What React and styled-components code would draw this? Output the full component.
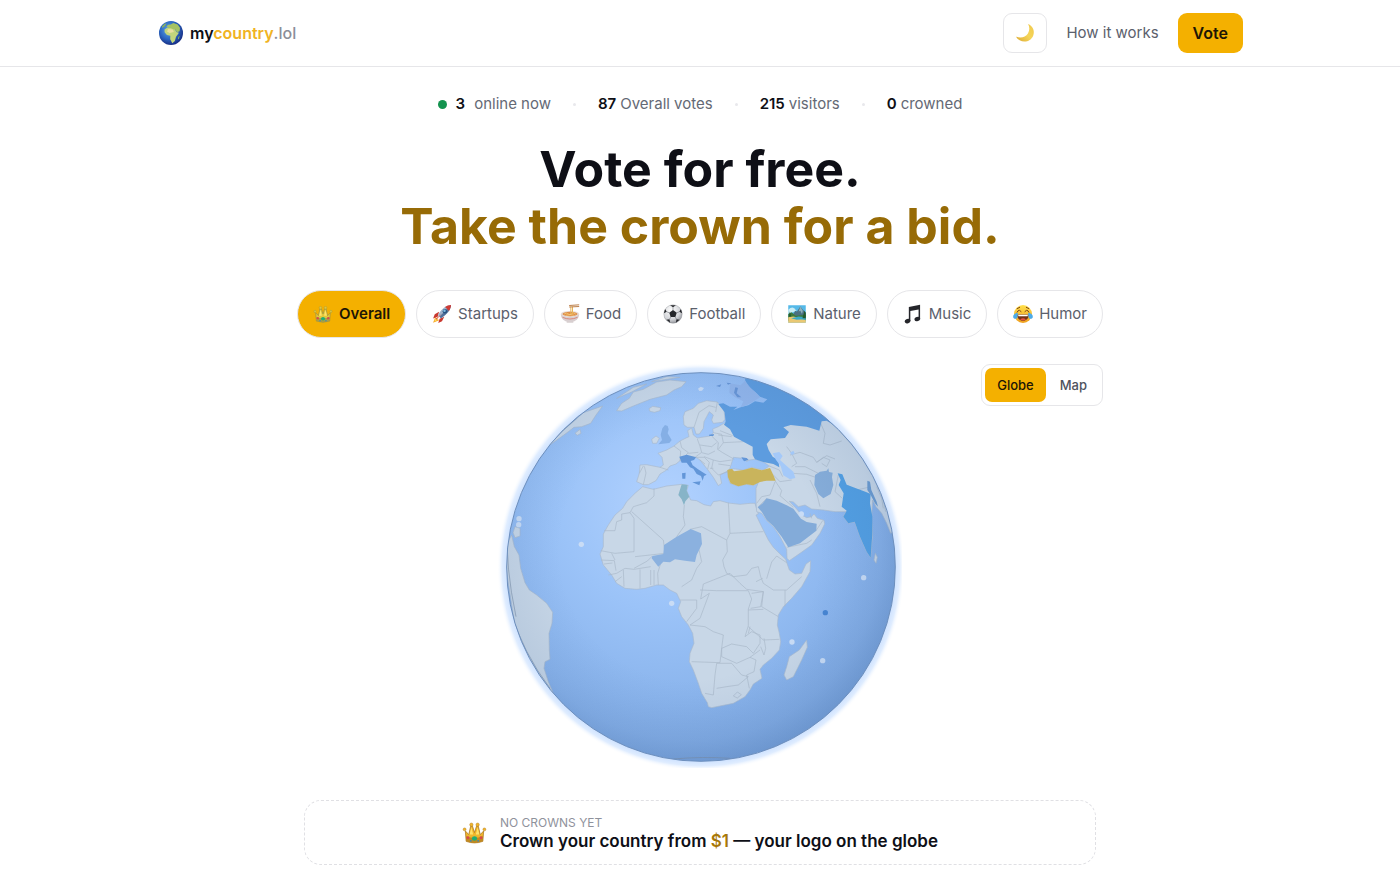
import React, { useState } from "react";
import styled, { createGlobalStyle, css } from "styled-components";

const GlobalStyle = createGlobalStyle`
  *, *::before, *::after { box-sizing: border-box; }
  body {
    margin: 0;
    background: #fff;
    color: #0e0f16;
    font-family: Inter, "Liberation Sans", sans-serif;
    font-size: 15px;
    line-height: 24px;
  }
  button, a { font: inherit; color: inherit; text-decoration: none; }
  button { cursor: pointer; }
`;

const Header = styled.header`
  border-bottom: 1px solid #e6e6e9;
`;

const HeaderInner = styled.div`
  max-width: 1086px;
  min-height: 66px;
  margin: 0 auto;
  display: flex;
  align-items: center;
  justify-content: space-between;
`;

const Brand = styled.a`
  display: flex;
  align-items: center;
  gap: 5px;
  font-size: 16px;
  font-weight: 600;
`;

const BrandAccent = styled.span`
  color: #f0b323;
`;

const BrandSuffix = styled.span`
  color: #8b8e99;
  font-weight: 500;
`;

const Nav = styled.nav`
  display: flex;
  align-items: center;
  gap: 19px;
`;

const NavLink = styled.a`
  color: #5b606c;
`;

const ThemeButton = styled.button`
  width: 44px;
  height: 40px;
  display: grid;
  place-items: center;
  padding: 0;
  border: 1px solid #e6e6e9;
  border-radius: 9px;
  background: #fff;
`;

const VoteLink = styled.a`
  padding: 8px 15px;
  border-radius: 9px;
  background: #f4b000;
  color: #1d1605;
  font-size: 16px;
  font-weight: 600;
`;

const Main = styled.main`
  max-width: 806px;
  margin: 0 auto;
  padding-top: 25px;
`;

const Stats = styled.ul`
  display: flex;
  justify-content: center;
  gap: 22px;
  margin: 0;
  padding: 0;
  list-style: none;
  color: #646975;
`;

const Stat = styled.li`
  display: flex;
  align-items: center;
  gap: ${(p) => (p.$live ? 9 : 4)}px;

  &:not(:first-child)::before {
    content: "";
    width: 3px;
    height: 3px;
    margin-right: 18px;
    border-radius: 50%;
    background: #e8e8ec;
  }
`;

const StatValue = styled.strong`
  color: #0e0f16;
  font-weight: 600;
`;

const LiveDot = styled.span`
  width: 9px;
  height: 9px;
  border-radius: 50%;
  background: #14934f;
`;

const Title = styled.h1`
  margin: 25px 0 0;
  font-size: 50px;
  line-height: 57px;
  font-weight: 700;
  text-align: center;
`;

const TitleAccent = styled.span`
  display: block;
  color: #976b06;
`;

const Categories = styled.div`
  display: flex;
  justify-content: space-between;
  margin-top: 35px;
`;

const Category = styled.button`
  display: flex;
  align-items: center;
  gap: 6px;
  height: 48px;
  padding: 0 15px;
  border: 1px solid #e6e6e9;
  border-radius: 24px;
  background: #fff;
  color: #5b606c;

  ${(p) =>
    p.$active &&
    css`
      background: #f4b000;
      color: #1d1605;
      font-weight: 600;
    `}
`;

const Stage = styled.section`
  display: grid;
  grid-template-columns: 1fr auto 1fr;
  align-items: start;
  margin-top: 26px;
`;

const GlobeArt = styled.svg`
  grid-column: 2;
  display: block;
  width: 404px;
  height: 404px;
`;

const ViewSwitch = styled.div`
  grid-column: 3;
  justify-self: end;
  display: flex;
  gap: 2px;
  padding: 3px;
  border: 1px solid #e6e6e9;
  border-radius: 9px;
`;

const ViewButton = styled.button`
  height: 34px;
  padding: 0 12px;
  border: 0;
  border-radius: 7px;
  background: ${(p) => (p.$active ? "#f4b000" : "transparent")};
  color: ${(p) => (p.$active ? "#1d1605" : "#4f535e")};
  font-size: 13px;
  font-weight: 500;
`;

const CrownCard = styled.a`
  display: flex;
  align-items: center;
  justify-content: center;
  gap: 13px;
  margin: 32px 7px 0;
  padding: 13px 16px;
  border: 1px dashed #e0e0e4;
  border-radius: 17px;
`;

const CardLabel = styled.span`
  display: block;
  color: #8f929c;
  font-size: 12px;
  line-height: 17px;
`;

const CardText = styled.strong`
  display: block;
  font-size: 17px;
  line-height: 20px;
  font-weight: 600;
`;

const Price = styled.span`
  color: #a87808;
`;

const IconSvg = styled.svg`
  display: block;
  flex: none;
`;

function Icon({ size = 20, children }) {
  return (
    <IconSvg width={size} height={size} viewBox="0 0 24 24" aria-hidden="true">
      {children}
    </IconSvg>
  );
}

function EarthIcon() {
  return (
    <Icon size={28}>
      <defs>
        <radialGradient id="earth" cx="42%" cy="38%" r="62%">
          <stop offset="0" stopColor="#62a9e6" />
          <stop offset=".6" stopColor="#2c67c2" />
          <stop offset="1" stopColor="#182f86" />
        </radialGradient>
      </defs>
      <circle cx="12" cy="12" r="10.3" fill="url(#earth)" />
      <path d="M6.500 9 9 7.200l4 .4 2.400 1.200 1.200 2.400 2.200.5-2.500 3.600-1 3.600-2.200 1.800-1.800-3.400.1-3-2.900-.5-2-2.400z" fill="#c3d67c" />
      <path d="M8 6.700 9.500 5l2.300-.2L14 3.400l3.700 1.400 2 2.800-.3 2.800-2.400 1-1.300-2.400-2.200-.3-1.900-1.200-1.500.2-.7-.8z" fill="#a5c262" />
      <path d="m9.500 8.500 4 .6 1 2-3.700.8-2.200-1.200z" fill="#ebe0a0" />
      <path d="m4.300 6.300 2.500-2.400 1.500.1-2 2.700-2 1zM18.200 15.400l1.200-1-.5 2.600-1 .6z" fill="#83ae66" />
    </Icon>
  );
}

function MoonIcon() {
  return (
    <Icon size={22}>
      <defs>
        <linearGradient id="moon" x1="0" y1="1" x2="1" y2="0">
          <stop offset="0" stopColor="#dca833" />
          <stop offset=".5" stopColor="#f5d559" />
          <stop offset="1" stopColor="#efc84d" />
        </linearGradient>
      </defs>
      <path d="M15.300 2.200c5.200 2.100 7.600 7.500 5.700 12.400-2.300 6.100-9.300 8.400-14.800 5.300-1.800-1-3.200-2.500-4-4.200 4.700 2.400 10.200 1.100 13-3.200 2-3.300 2-7 .1-10.300z" fill="url(#moon)" />
    </Icon>
  );
}

function CrownIcon({ size, soft }) {
  const gold = soft ? "#e3c83a" : "#f0b62b";
  const shade = soft ? "#8f8b4a" : "#a9731a";
  return (
    <Icon size={size}>
      <path d="M3.200 10.500 6.500 14 8.300 6h1.800l1.900 6 1.900-6h1.800l1.800 8 3.300-3.500-.8 10q-8 3-16 0z" fill={gold} stroke={shade} strokeWidth=".7" />
      <path d="M4 15.500q8 3 16 0l-.2 5q-7.800 2.700-15.600 0z" fill={shade} opacity=".65" />
      <g fill={gold} stroke={shade} strokeWidth=".4">
        <circle cx="2.500" cy="9" r="1.400" />
        <circle cx="9" cy="4.500" r="1.600" />
        <circle cx="15" cy="4.500" r="1.600" />
        <circle cx="21.500" cy="9" r="1.400" />
      </g>
      <path d="m7.300 14 1.700-7 1.700 7zM13.300 14 15 7l1.700 7z" fill="#ffe26a" />
      <ellipse cx="12" cy="17.800" rx="2.500" ry="2.100" fill="#20ad76" />
      <circle cx="5.700" cy="17" r="1.400" fill="#d64a4a" />
      <circle cx="18.300" cy="17" r="1.400" fill="#d64a4a" />
      <circle cx="8.500" cy="20" r=".9" fill="#3a87b8" />
      <circle cx="15.500" cy="20" r=".9" fill="#3a87b8" />
    </Icon>
  );
}

function RocketIcon() {
  return (
    <Icon>
      <path d="M1.300 22.500 4 15.500l4.500 4z" fill="#f5a623" />
      <path d="m2.700 21 1.800-4.500 2.600 2.300z" fill="#ffe066" />
      <path d="m8.500 9.300-5.200 2.900-2 5.300 5.500-2.200zM14.700 15.300 12 20.600l-4.500 2.300 1.600-5.200z" fill="#c9382f" />
      <path d="M22.800 1.200c-5.600.3-10.700 3.700-15.700 12.200l3.700 3.600c8-4.800 11.700-10 12-15.800z" fill="#9fb3cc" />
      <path d="M22.800 1.200c-.6 5.300-4.500 10.700-12 15.800l-1.900-1.800z" fill="#53719b" />
      <path d="M22.800 1.200c-2.700.1-5 1-7.100 2.500l4.700 4.600c1.500-2.300 2.300-4.600 2.400-7.100z" fill="#cf3b35" />
      <circle cx="15.500" cy="8.700" r="2.700" fill="#29527f" />
      <circle cx="15" cy="8.200" r="1.500" fill="#7fbbe4" />
      <path d="m12 11.500-6.800 7.300-1-.9z" fill="#d94b37" />
    </Icon>
  );
}

function BowlIcon() {
  return (
    <Icon>
      <path d="M1 12h22c0 5-3.300 8-7 9.100v1.400H8v-1.400C4.300 20 1 17 1 12z" fill="#d8cfd0" />
      <ellipse cx="12" cy="12" rx="11" ry="3.700" fill="#e7dbd6" />
      <ellipse cx="12" cy="12" rx="9" ry="2.700" fill="#dd8d48" />
      <path d="M5 12q3-2 5 0t4-.3 5 .5M7 13.500q5-1.500 10 0" stroke="#f5ca74" fill="none" />
      <path d="M13 12V3.200M15 12V3.200" stroke="#e6b55a" strokeWidth="1.200" />
      <path d="M11 1.800 23 1M11 3.600 23 3" stroke="#b7743a" strokeWidth="1.100" />
      <path d="M3 16q9 4 18 0" stroke="#d77a6e" fill="none" />
    </Icon>
  );
}

function BallIcon() {
  return (
    <Icon>
      <defs>
        <radialGradient id="ball" cx="40%" cy="30%" r="75%">
          <stop offset="0" stopColor="#fff" />
          <stop offset=".65" stopColor="#d4d6da" />
          <stop offset="1" stopColor="#8d8f94" />
        </radialGradient>
      </defs>
      <circle cx="12" cy="12" r="11" fill="url(#ball)" stroke="#777a80" strokeWidth=".4" />
      <path d="m12 7.300 4.500 3.200-1.700 5.200H9.200l-1.700-5.200z" fill="#25272b" />
      <path d="M8.500 1.600h7L12 3.800zM1 11.200 2.500 6l2 3.400zM23 11.200 21.500 6l-2 3.400zM4.200 18.800l4.300 3.600-.7-4zM19.800 18.800l-4.300 3.600.7-4z" fill="#25272b" />
      <path d="M12 3.800v3.500M4.500 9.400l3 1.100M19.500 9.400l-3 1.100M9.200 15.700l-1.400 2.700M14.800 15.700l1.400 2.700" stroke="#686b71" strokeWidth=".7" />
    </Icon>
  );
}

function LandscapeIcon() {
  return (
    <Icon>
      <path d="M1.500 1.500h21v21h-21z" fill="#55b9e8" />
      <path d="M1.500 7q4-4 7-2l3 3-10 4z" fill="#c9edf5" />
      <path d="m7 13 3-5 2 1 4-6 3 4 3.500 3v8H7z" fill="#4b7081" />
      <path d="m16 3-2 6 2-1 2 4 1-4z" fill="#8fb2bd" />
      <path d="m1.500 12 4-2 5 4 12-1v7h-21z" fill="#3c7a3d" />
      <path d="m1.500 16 6-1 4 1 11 3v3.500h-21z" fill="#eac873" />
      <path d="m5 17 9-2 8.500 1v3q-6-1-11 0z" fill="#3aa9c9" />
      <path d="m2 15 1.500-6L5 15zM18.500 17 21 8l1.500 3v6z" fill="#245a2c" />
    </Icon>
  );
}

function NotesIcon() {
  return (
    <Icon>
      <path d="M7 3.500 20.500.8v17h-1.800V6.500L8.800 8.400V20.500H7z" fill="#25262b" />
      <ellipse cx="5.500" cy="20.500" rx="3.500" ry="2.600" transform="rotate(-18 5.500 20.500)" fill="#25262b" />
      <ellipse cx="17.200" cy="18" rx="3.500" ry="2.600" transform="rotate(-18 17.200 18)" fill="#25262b" />
    </Icon>
  );
}

function LaughIcon() {
  return (
    <Icon>
      <defs>
        <linearGradient id="laugh" x2="0" y2="1">
          <stop offset="0" stopColor="#ffe04b" />
          <stop offset="1" stopColor="#ef9f1e" />
        </linearGradient>
      </defs>
      <circle cx="12" cy="12" r="10.800" fill="url(#laugh)" />
      <path d="M5 12.500h14c0 4.500-3 7.500-7 7.500s-7-3-7-7.500z" fill="#743316" />
      <path d="M6 12.800h12l-.6 2H6.600z" fill="#fff" />
      <path d="M8.500 18.500q3.500-2.700 7 0-3.500 2.500-7 0z" fill="#e55143" />
      <path d="m5 9.800 1-1.600q1.700-1.700 3.700.8M19 9.800l-1-1.600q-1.700-1.700-3.700.8M5 5.500 8 4M19 5.500 16 4" fill="none" stroke="#7b4217" strokeWidth="1.200" strokeLinecap="round" />
      <path d="M5.800 10.500C2 11 .2 13 .2 15.300c0 3.300 4.700 3.400 5.200.2zM18.200 10.500c3.800.5 5.600 2.500 5.600 4.800 0 3.300-4.700 3.400-5.200.2z" fill="#4cabe9" />
    </Icon>
  );
}

const LAND = [
  // Africa
  "M428 380 460 388 500 378 545 373 565 376 560 392 572 420 590 422 612 434 632 438 640 425 660 422 685 429 720 433 750 430 765 430 775 462 768 465 785 500 805 540 820 562 838 580 857 598 868 630 885 642 905 640 918 612 932 602 930 635 905 680 875 715 850 740 835 765 832 795 838 820 842 845 838 870 815 895 790 915 780 928 786 955 760 972 750 990 735 1010 700 1030 660 1038 635 1043 625 1040 622 1028 605 1000 595 970 580 930 568 905 570 880 582 850 578 820 565 795 545 770 535 745 542 725 530 700 510 690 490 675 470 675 435 685 410 688 375 685 350 670 335 645 310 615 300 582 310 560 310 522 325 495 345 465 368 445 380 425 405 400z",
  // Eurasia
  "M420 315 440 314 480 322 490 315 486 292 474 280 500 270 522 258 540 243 558 234 567 230 563 212 575 204 580 225 592 234 630 228 640 218 638 207 655 200 672 190 720 150 960 120 1060 240 1230 500 1172 520 1160 490 1145 460 1128 440 1118 420 1115 470 1118 520 1112 593 1100 575 1080 530 1064 485 1045 490 1030 470 1038 455 1005 455 970 450 935 447 915 435 895 440 880 426 868 424 890 447 905 465 920 473 935 470 942 462 952 475 972 481 974 492 960 520 935 555 900 580 868 602 861 595 860 568 840 530 820 500 800 482 785 460 770 455 768 430 768 385 776 365 760 377 740 373 715 379 690 370 683 350 684 330 700 326 730 330 755 322 790 330 808 318 790 306 765 298 748 300 740 304 728 295 700 292 694 312 688 330 660 345 665 370 655 377 640 352 624 330 600 300 588 292 560 305 540 302 528 312 510 318 500 330 480 342 468 362 445 374 430 374 410 365 418 340z",
  // Scandinavia
  "M550 170 555 155 580 145 595 130 620 122 652 126 672 150 675 178 668 187 640 190 635 180 640 165 628 155 620 170 612 185 610 205 598 222 588 222 582 202 562 202 552 195z",
  // South America
  "M10 570 35 525 43 560 57 585 62 625 75 668 88 690 110 705 140 730 158 757 156 790 147 820 148 870 150 898 135 905 132 925 145 965 160 1000 60 900z",
  // Greenland and Iceland
  "M350 152 365 130 388 115 400 96 430 88 470 66 510 60 558 65 545 80 522 90 500 105 450 118 400 138 365 153z",
  "M447 146 458 139 482 143 480 152 463 157 450 154z",
  // Eastern Canada
  "M145 258 178 220 215 190 250 158 308 138 288 165 272 190 245 200 222 202 205 215 182 232z",
  "M225 220 240 208 243 220 232 226zM350 115 400 82 440 72 395 96zM455 65 500 50 540 52 500 58z",
  // Ireland, Madagascar, Sri Lanka, Caribbean
  "M455 238 468 228 478 235 470 250 458 250z",
  "M920 840 922 862 905 900 880 950 860 960 852 945 860 920 868 890 898 870z",
  "M1126 580 1132 592 1128 610 1122 600zM45 500 60 505 60 528 45 533 39 518z",
];

const BORDERS =
  "M462 385v23l-22 20-40 12-10 18-25 4v18l-15 5-5 27h-33M390 458l12 17v100l-57 5-43-8M395 455l95 85 5 40-90 10M553 435l-3 35 5 25-25 35M570 508l35-8 75 40 10-20-5-92M690 520l100-5M680 540l2 35-14 25 4 20 8 20 20 10 40-5 15-20 20-5 7 30M610 672l30-12 50-20 30 30 20 18 50 7M782 650l8 20 30 20h40l45-40M790 695l-5 45 50 30M855 690v50M600 690l50 2h95l10 25-10 30v50l-10 33M755 700l35-5-8 45-30 5M745 750l45-2M745 800l45 40 48-2M665 865l30-13 45 8 20 20 20-30v-25l-25-10-20 15M665 865v25l45 20 40-18 30-22M575 905l85 3 5-43 5-40-30-10-25-15-45-5M650 910l-5 35-5 60-25-5M650 910h45l30 35 20 5-30 25-35 5-30 5M750 892l18 8-6 35-22 10 8 40M540 720h50v25l-30 40M610 672l-8 45 26-17-28 75-30 20M545 680l30-20 15-35 15-20-10-45M475 675l-2-35 9-30M462 675v-45M452 675v-45M420 685v-57M372 680l-2-50M325 645l25-5 25-15 27 3 50-8M303 600l40 2 5 30M335 580l10 20M345 665l20-15M312 612l25-3M402 625l40-22 15-15M860 608l-30-20-15 18-15 50M768 665l20-10M700 1008l12-12 12 8-12 10zM745 820l5-20M782 860l10 25 5-20-5-30" +
  "M418 340l12-22M430 374l8-35-5-20M480 322l25 8M522 258l20 15-2 30M540 243l5 20 20 15-10 10 30 4 20-15-5-18-8-22M565 280l30-3M600 255l35 5 15-12M635 228l20 20-2 20 15 10 35 20M640 218l25 5 5 25-15 20M670 248l60-3M655 225l40 5M660 212l38 15M605 278l20 5 20-10M588 292l25 0 15 15-5 20M612 290l28 10 20 5 35-5M640 300l-5 25 20 20 30-10M655 312l35 5M630 325l10 0M600 300l15 12M582 202l15-45 30-20 20 5M652 126l-5 30" +
  "M960 185l15 35-5 30 20 5 35-12M870 285l30-8 40 15 10 15 30-20 25 10M860 260l15 20 15 30-15 10M885 320l30 0 40 20M950 307l20-15 20 8-10 20-15-10M880 340l40 3 30 10M930 360l20 40 10 40M1015 345l-10 50 22 20M1020 215l60 65M1040 375l30 15 35-8M825 362l20 30-5 15 40 35M770 430l15-20 25-5 15-40M800 415l-25 25M860 562l60-12 15-10M948 512l20-30M930 460l5 15M808 318l30 12 10 20M820 345l20 20 35-5M1130 380l15 35 5 30M1145 395l12 60";

const HIGHLIGHTS = [
  { name: "Russia", fill: "#5d9cdf", d: "M735 60 745 80 768 98 780 110 802 118 790 128 765 124 745 136 722 142 700 150 712 140 690 140 670 130 655 132 674 157 677 185 672 194 690 208 702 230 730 245 758 260 758 285 765 298 790 306 820 312 838 322 835 300 818 290 806 270 800 252 812 238 855 234 867 216 850 202 872 195 920 200 958 212 965 184 980 182 1010 200 900 40 745 20z" },
  { name: "India", fill: "#529fe3", d: "M1013 340 1027 343 1040 374 1060 382 1098 396 1112 402 1110 430 1117 470 1117 520 1112 593 1100 575 1080 530 1064 485 1045 490 1030 470 1040 452 1025 440 1031 400 1016 375 1022 360z" },
  { name: "Bangladesh", fill: "#6b9bd0", d: "M1102 362 1110 365 1114 390 1130 425 1134 440 1125 430 1112 405 1102 390z" },
  { name: "Turkey", fill: "#c9b45c", d: "M682 330 696 326 702 334 730 330 755 323 785 331 810 324 820 345 827 362 800 362 780 366 760 376 740 373 715 379 692 370 684 352z" },
  { name: "Saudi Arabia", fill: "#83abd9", d: "M800 415 830 422 860 436 880 446 903 476 920 486 950 491 949 512 900 550 865 562 845 530 820 498 800 480 785 455 773 442 788 430z" },
  { name: "Niger", fill: "#8bb1df", d: "M492 555 530 530 572 507 603 520 606 552 590 585 585 606 555 602 525 598 510 607 490 605 475 620 455 595 457 588 490 582z" },
  { name: "Afghanistan", fill: "#86add9", d: "M945 345 960 335 980 332 985 325 987 336 998 338 996 352 1000 375 992 402 970 415 955 402 943 375z" },
  { name: "Tunisia", fill: "#87b4c8", d: "M545 373 563 375 560 392 568 410 556 424 552 436 545 418 535 405z" },
  { name: "United Kingdom", fill: "#85afe5", d: "M487 205 495 195 503 198 506 208 503 220 515 240 508 249 475 253 486 240 482 224z" },
  { name: "Italy", fill: "#6296d8", d: "M538 290 560 284 588 292 582 300 572 303 578 316 594 328 620 344 612 348 608 362 603 348 590 342 580 326 570 322 560 308 545 308zM577 367 602 364 598 376zM546 340 557 338 556 356 547 356zM627 224 642 222 640 228 628 228zM724 292 740 294 746 300 732 304z" },
];

const LAKES = [
  "M818 280 838 276 848 288 840 300 860 318 880 335 886 354 870 358 850 346 842 318 828 300z",
  "M870 278 880 272 884 280 876 286z",
];

const ISLANDS = [
  [57, 476], [56, 494], [244, 553], [515, 730], [1091, 653], [876, 846], [968, 902], [904, 462],
];

function Globe() {
  return (
    <GlobeArt viewBox="-6 12 1212 1212" role="img" aria-label="Globe coloured by votes per country">
      <defs>
        <clipPath id="sphere">
          <circle cx="603" cy="621" r="583" />
        </clipPath>
        <radialGradient id="halo" gradientUnits="userSpaceOnUse" cx="603" cy="621" r="612">
          <stop offset=".945" stopColor="#c9dfff" />
          <stop offset=".975" stopColor="#e0edff" />
          <stop offset="1" stopColor="#fff" stopOpacity="0" />
        </radialGradient>
        <radialGradient id="ocean" gradientUnits="userSpaceOnUse" cx="500" cy="430" r="800">
          <stop offset="0" stopColor="#b2d2ff" />
          <stop offset=".4" stopColor="#9bc3f8" />
          <stop offset=".75" stopColor="#8ab4ec" />
          <stop offset="1" stopColor="#7ba5de" />
        </radialGradient>
        <radialGradient id="shade" gradientUnits="userSpaceOnUse" cx="570" cy="570" r="650">
          <stop offset=".6" stopColor="#365f96" stopOpacity="0" />
          <stop offset=".88" stopColor="#365f96" stopOpacity=".1" />
          <stop offset="1" stopColor="#365f96" stopOpacity=".22" />
        </radialGradient>
      </defs>
      <circle cx="603" cy="621" r="612" fill="url(#halo)" />
      <g clipPath="url(#sphere)">
        <circle cx="603" cy="621" r="583" fill="url(#ocean)" />
        <g fill="#c8d7e7" stroke="#a9bacd" strokeWidth="2" strokeLinejoin="round">
          {LAND.map((d) => (
            <path key={d} d={d} />
          ))}
        </g>
        <path d={BORDERS} fill="none" stroke="#a9b8c9" strokeWidth="2" strokeLinejoin="round" />
        {HIGHLIGHTS.map((c) => (
          <path key={c.name} d={c.d} fill={c.fill} />
        ))}
        <path d="M690 70 722 76 735 62 750 82 768 98 780 112 758 126 740 136 722 142 730 124 705 112 688 98z" fill="#91b5eb" />
        <path d="M706 82 714 84 710 100 724 112 712 112 702 98zM648 78l16-5-4 8zM680 68l14 2-10 4z" fill="#6795d6" />
        <g fill="#a4c9f9">
          {LAKES.map((d) => (
            <path key={d} d={d} />
          ))}
        </g>
        <g fill="#c9dcf5">
          {ISLANDS.map(([x, y]) => (
            <circle key={`${x}-${y}`} cx={x} cy={y} r="8" />
          ))}
          <path d="m594 86 8-6 10 4-6 8-8 1z" />
        </g>
        <circle cx="976" cy="758" r="8" fill="#4785d2" />
        <path d="M30 750Q70 880 150 985M520 1197q90-8 170-2M22 500Q16 620 48 770M130 265 240 165" stroke="#8294aa" strokeWidth="2" fill="none" />
        <circle cx="603" cy="621" r="583" fill="url(#shade)" />
      </g>
      <circle cx="603" cy="621" r="583" fill="none" stroke="#6d8fbd" strokeWidth="3" />
    </GlobeArt>
  );
}

const CATEGORIES = [
  { name: "Overall", icon: <CrownIcon size={20} soft /> },
  { name: "Startups", icon: <RocketIcon /> },
  { name: "Food", icon: <BowlIcon /> },
  { name: "Football", icon: <BallIcon /> },
  { name: "Nature", icon: <LandscapeIcon /> },
  { name: "Music", icon: <NotesIcon /> },
  { name: "Humor", icon: <LaughIcon /> },
];

export default function App() {
  const [category, setCategory] = useState("Overall");
  const [view, setView] = useState("Globe");

  return (
    <>
      <GlobalStyle />
      <Header>
        <HeaderInner>
          <Brand href="#">
            <EarthIcon />
            <span>
              my<BrandAccent>country</BrandAccent>
              <BrandSuffix>.lol</BrandSuffix>
            </span>
          </Brand>
          <Nav>
            <ThemeButton type="button" aria-label="Switch to dark theme">
              <MoonIcon />
            </ThemeButton>
            <NavLink href="#how">How it works</NavLink>
            <VoteLink href="#vote">Vote</VoteLink>
          </Nav>
        </HeaderInner>
      </Header>
      <Main>
        <Stats>
          <Stat $live>
            <LiveDot />
            <StatValue>3</StatValue> online now
          </Stat>
          <Stat>
            <StatValue>87</StatValue> Overall votes
          </Stat>
          <Stat>
            <StatValue>215</StatValue> visitors
          </Stat>
          <Stat>
            <StatValue>0</StatValue> crowned
          </Stat>
        </Stats>
        <Title>
          Vote for free.
          <TitleAccent>Take the crown for a bid.</TitleAccent>
        </Title>
        <Categories>
          {CATEGORIES.map((c) => (
            <Category
              key={c.name}
              type="button"
              $active={c.name === category}
              aria-pressed={c.name === category}
              onClick={() => setCategory(c.name)}
            >
              {c.icon}
              {c.name}
            </Category>
          ))}
        </Categories>
        <Stage>
          <Globe />
          <ViewSwitch>
            {["Globe", "Map"].map((name) => (
              <ViewButton
                key={name}
                type="button"
                $active={name === view}
                aria-pressed={name === view}
                onClick={() => setView(name)}
              >
                {name}
              </ViewButton>
            ))}
          </ViewSwitch>
        </Stage>
        <CrownCard href="#crown">
          <CrownIcon size={25} />
          <span>
            <CardLabel>NO CROWNS YET</CardLabel>
            <CardText>
              Crown your country from <Price>$1</Price> — your logo on the globe
            </CardText>
          </span>
        </CrownCard>
      </Main>
    </>
  );
}
